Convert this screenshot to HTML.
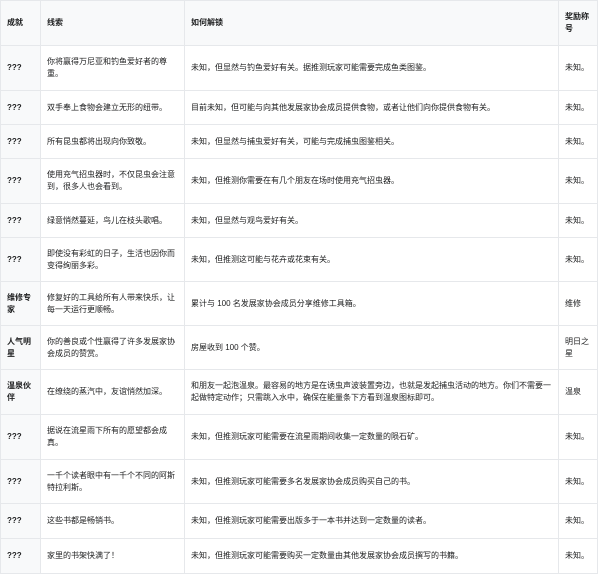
<!DOCTYPE html>
<html><head><meta charset="utf-8"><style>
body{margin:0;background:#fff;font-family:"Liberation Sans","Noto Sans CJK SC",sans-serif;font-size:8px;color:#202122;}
table{border-collapse:collapse;table-layout:fixed;width:597px;}
td,th{border:1px solid #e6e8eb;padding:0 6px;vertical-align:middle;line-height:12px;text-align:left;}
th{background:#f8f9fa;font-weight:bold;}
td:first-child{background:#f8f9fa;font-weight:bold;}
</style></head><body>
<table>
<colgroup><col style="width:40px"><col style="width:144px"><col style="width:374px"><col style="width:39px"></colgroup>
<tr style="height:45px"><th>成就</th><th>线索</th><th>如何解锁</th><th>奖励称号</th></tr>
<tr style="height:45px"><td>???</td><td>你将赢得万尼亚和钓鱼爱好者的尊重。</td><td>未知，但显然与钓鱼爱好有关。据推测玩家可能需要完成鱼类图鉴。</td><td>未知。</td></tr>
<tr style="height:34px"><td>???</td><td>双手奉上食物会建立无形的纽带。</td><td>目前未知，但可能与向其他发展家协会成员提供食物，或者让他们向你提供食物有关。</td><td>未知。</td></tr>
<tr style="height:34px"><td>???</td><td>所有昆虫都将出现向你致敬。</td><td>未知，但显然与捕虫爱好有关，可能与完成捕虫图鉴相关。</td><td>未知。</td></tr>
<tr style="height:45px"><td>???</td><td>使用充气招虫器时，不仅昆虫会注意到，很多人也会看到。</td><td>未知，但推测你需要在有几个朋友在场时使用充气招虫器。</td><td>未知。</td></tr>
<tr style="height:34px"><td>???</td><td>绿意悄然蔓延，鸟儿在枝头歌唱。</td><td>未知，但显然与观鸟爱好有关。</td><td>未知。</td></tr>
<tr style="height:44px"><td>???</td><td>即使没有彩虹的日子，生活也因你而变得绚丽多彩。</td><td>未知，但推测这可能与花卉或花束有关。</td><td>未知。</td></tr>
<tr style="height:44px"><td>维修专家</td><td>修复好的工具给所有人带来快乐，让每一天运行更顺畅。</td><td>累计与 100 名发展家协会成员分享维修工具箱。</td><td>维修</td></tr>
<tr style="height:44px"><td>人气明星</td><td>你的善良或个性赢得了许多发展家协会成员的赞赏。</td><td>房屋收到 100 个赞。</td><td>明日之星</td></tr>
<tr style="height:45px"><td>温泉伙伴</td><td>在缭绕的蒸汽中，友谊悄然加深。</td><td>和朋友一起泡温泉。最容易的地方是在诱虫声波装置旁边，也就是发起捕虫活动的地方。你们不需要一起做特定动作；只需跳入水中，确保在能量条下方看到温泉图标即可。</td><td>温泉</td></tr>
<tr style="height:45px"><td>???</td><td>据说在流星雨下所有的愿望都会成真。</td><td>未知，但推测玩家可能需要在流星雨期间收集一定数量的陨石矿。</td><td>未知。</td></tr>
<tr style="height:44px"><td>???</td><td>一千个读者眼中有一千个不同的阿斯特拉利斯。</td><td>未知，但推测玩家可能需要多名发展家协会成员购买自己的书。</td><td>未知。</td></tr>
<tr style="height:35px"><td>???</td><td>这些书都是畅销书。</td><td>未知，但推测玩家可能需要出版多于一本书并达到一定数量的读者。</td><td>未知。</td></tr>
<tr style="height:35px"><td>???</td><td>家里的书架快满了！</td><td>未知，但推测玩家可能需要购买一定数量由其他发展家协会成员撰写的书籍。</td><td>未知。</td></tr>
</table>
</body></html>
